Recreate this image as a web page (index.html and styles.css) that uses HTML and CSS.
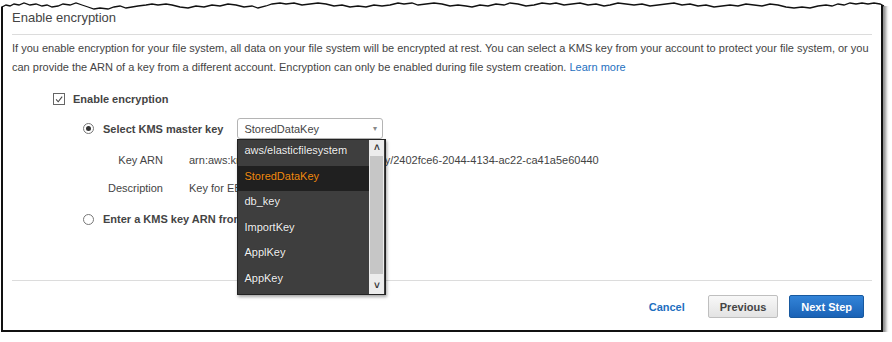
FILE: index.html
```
<!DOCTYPE html>
<html lang="en">
<head>
    <meta charset="UTF-8">
    <title>Enable encryption</title>
    <link rel="stylesheet" href="styles.css">
</head>
<body>
    <div class="frame">
        <!-- torn top edge of the screenshot -->
        <svg class="torn" width="890" height="12" viewBox="0 0 890 12">
            <path d="M0 0 L0 7 L6 5 L10 6 L14 4 L19 5 L24 3 L30 5 L36 4 L42 6 L47 5 L52 7 L58 6 L63 4 L70 5 L76 3 L82 5 L88 7 L94 9 L100 8 L108 9 L114 7 L120 6 L126 8 L132 7 L138 6 L146 5 L152 4 L158 5 L166 4 L172 5 L180 7 L188 8 L196 6 L204 7 L212 5 L220 6 L228 4 L236 5 L244 7 L252 6 L258 8 L266 6 L272 4 L280 3 L286 4 L294 3 L302 5 L310 4 L318 3 L326 4 L334 6 L342 5 L350 7 L358 6 L366 7 L374 5 L382 6 L390 5 L398 3 L404 4 L412 3 L418 5 L426 4 L434 3 L442 4 L450 6 L458 5 L466 6 L472 7 L480 5 L488 6 L496 4 L504 5 L510 3 L518 4 L526 6 L534 5 L542 3 L550 4 L556 3 L564 5 L572 4 L580 3 L588 5 L596 4 L604 6 L610 5 L618 3 L626 4 L634 5 L642 4 L650 6 L658 5 L666 4 L674 3 L682 5 L690 4 L698 6 L706 5 L714 7 L722 6 L730 5 L738 6 L746 4 L754 5 L762 6 L770 4 L778 5 L786 7 L794 8 L802 7 L810 8 L818 6 L826 5 L832 6 L838 4 L844 5 L850 3 L856 4 L862 3 L868 4 L874 3 L880 4 L884 6 L890 6 L890 0 Z" fill="#ffffff"/>
            <polyline points="2,7 6,5 10,6 14,4 19,5 24,3 30,5 36,4 42,6 47,5 52,7 58,6 63,4 70,5 76,3 82,5 88,7 94,9 100,8 108,9 114,7 120,6 126,8 132,7 138,6 146,5 152,4 158,5 166,4 172,5 180,7 188,8 196,6 204,7 212,5 220,6 228,4 236,5 244,7 252,6 258,8 266,6 272,4 280,3 286,4 294,3 302,5 310,4 318,3 326,4 334,6 342,5 350,7 358,6 366,7 374,5 382,6 390,5 398,3 404,4 412,3 418,5 426,4 434,3 442,4 450,6 458,5 466,6 472,7 480,5 488,6 496,4 504,5 510,3 518,4 526,6 534,5 542,3 550,4 556,3 564,5 572,4 580,3 588,5 596,4 604,6 610,5 618,3 626,4 634,5 642,4 650,6 658,5 666,4 674,3 682,5 690,4 698,6 706,5 714,7 722,6 730,5 738,6 746,4 754,5 762,6 770,4 778,5 786,7 794,8 802,7 810,8 818,6 826,5 832,6 838,4 844,5 850,3 856,4 862,3 868,4 874,3 880,4 884,6" fill="none" stroke="#111" stroke-width="1.3"/>
        </svg>

        <div class="panel">
            <h2 class="panel-title">Enable encryption</h2>
            <p class="intro">If you enable encryption for your file system, all data on your file system will be encrypted at rest. You can select a KMS key from your account to protect your file system, or you<br>can provide the ARN of a key from a different account. Encryption can only be enabled during file system creation. <a href="#" class="link">Learn more</a></p>

            <div class="options">
                <div class="check-row">
                    <span class="checkbox">
                        <svg width="11" height="11" viewBox="0 0 11 11"><path d="M2.3 5.4 L4.6 8 L9 2.4" fill="none" stroke="#444" stroke-width="1.2"/></svg>
                    </span>
                    <span class="opt-label">Enable encryption</span>
                </div>

                <div class="key-choice">
                    <div class="radio-row">
                        <span class="radio checked"></span>
                        <span class="opt-label">Select KMS master key</span>
                        <div class="select-wrap">
                            <div class="select-box">
                                <span>StoredDataKey</span>
                                <span class="caret">&#9662;</span>
                            </div>
                            <div class="dropdown">
                                <ul class="dropdown-list">
                                    <li>aws/elasticfilesystem</li>
                                    <li class="active">StoredDataKey</li>
                                    <li>db_key</li>
                                    <li>ImportKey</li>
                                    <li>ApplKey</li>
                                    <li>AppKey</li>
                                </ul>
                                <div class="scrollbar">
                                    <span class="scroll-btn">&#708;</span>
                                    <span class="scroll-thumb"></span>
                                    <span class="scroll-btn">&#709;</span>
                                </div>
                            </div>
                        </div>
                    </div>

                    <dl class="key-details">
                        <dt>Key ARN</dt>
                        <dd>arn:aws:kms:us-east-1:12345678901:key/2402fce6-2044-4134-ac22-ca41a5e60440</dd>
                        <dt>Description</dt>
                        <dd>Key for EBS volumes</dd>
                    </dl>

                    <div class="radio-row arn-row">
                        <span class="radio"></span>
                        <span class="opt-label">Enter a KMS key ARN from another account</span>
                    </div>
                </div>
            </div>
        </div>

        <div class="footer">
            <a href="#" class="cancel-link">Cancel</a>
            <button class="btn btn-default">Previous</button>
            <button class="btn btn-primary">Next Step</button>
        </div>
    </div>
</body>
</html>
```

FILE: styles.css
```
body {
    margin: 0;
    background: #ffffff;
    font-family: "Liberation Sans", Arial, sans-serif;
    color: #444;
}

/* outer frame of the screenshot */
.frame {
    position: relative;
    margin-left: 1px;
    width: 878px;
    border: solid #111;
    border-width: 0 2px 2px 2px;
    box-shadow: 3px 3px 3px rgba(0, 0, 0, 0.45);
    background: #ffffff;
}

.torn {
    position: absolute;
    top: 0;
    left: -3px;
    display: block;
}

.panel {
    padding: 9px 9px 51px 9px;
}

.panel-title {
    margin: 0;
    padding-bottom: 7px;
    border-bottom: 1px solid #dcdcdc;
    font-size: 13px;
    font-weight: normal;
    line-height: 18px;
    color: #444;
}

.intro {
    margin: 4px 0 0 0;
    font-size: 11px;
    line-height: 19px;
    color: #444;
    white-space: nowrap;
}

.link {
    color: #1e6fc0;
    text-decoration: none;
}

.options {
    margin-top: 12px;
    padding-left: 41px;
}

.check-row {
    display: flex;
    align-items: center;
    height: 20px;
}

.checkbox {
    width: 12px;
    height: 12px;
    border: 1px solid #666;
    box-sizing: border-box;
    display: flex;
    align-items: center;
    justify-content: center;
    margin-right: 8px;
}

.checkbox svg {
    display: block;
}

.opt-label {
    font-size: 11px;
    font-weight: bold;
    color: #444;
}

.key-choice {
    padding-left: 30px;
}

.radio-row {
    display: flex;
    align-items: center;
    height: 21px;
    margin-top: 9px;
}

.radio {
    width: 11px;
    height: 11px;
    border: 1px solid #777;
    border-radius: 50%;
    box-sizing: border-box;
    margin-right: 9px;
    display: flex;
    align-items: center;
    justify-content: center;
    background: #fff;
}

.radio.checked::after {
    content: "";
    width: 5px;
    height: 5px;
    border-radius: 50%;
    background: #333;
}

.select-wrap {
    position: relative;
    margin-left: 14px;
}

.select-box {
    width: 146px;
    height: 21px;
    box-sizing: border-box;
    border: 1px solid #b4b4b4;
    border-radius: 3px;
    padding: 0 5px 0 6px;
    display: flex;
    align-items: center;
    justify-content: space-between;
    font-size: 11px;
    color: #444;
}

.caret {
    font-size: 8px;
    color: #888;
}

/* open dropdown list */
.dropdown {
    position: absolute;
    top: 100%;
    left: 0;
    width: 149px;
    height: 156px;
    box-sizing: border-box;
    background: #3e3e3e;
    border: 1px solid #222;
    box-shadow: 1px 2px 3px rgba(0, 0, 0, 0.35);
    display: flex;
    z-index: 5;
}

.dropdown-list {
    list-style: none;
    margin: 0;
    padding: 0;
    flex: 1;
}

.dropdown-list li {
    height: 25.6px;
    box-sizing: border-box;
    padding: 0 0 4px 6px;
    line-height: 21px;
    font-size: 11px;
    color: #f2f2f2;
    text-shadow: 0 0 1px rgba(0, 0, 0, 0.6);
}

.dropdown-list li.active {
    background: #202020;
    color: #f08c14;
}

.scrollbar {
    width: 15px;
    margin-right: 1px;
    background: #ececec;
    display: flex;
    flex-direction: column;
    align-items: center;
}

.scroll-btn {
    height: 16px;
    line-height: 16px;
    font-size: 10px;
    font-weight: bold;
    color: #333;
}

.scroll-thumb {
    flex: 1;
    width: 13px;
    background: #c6c6c6;
    margin-bottom: 4px;
}

.key-details {
    display: grid;
    grid-template-columns: 60px auto;
    column-gap: 26px;
    margin: 7px 0 0 0;
    padding-left: 20px;
    font-size: 11px;
    color: #444;
}

.key-details dt,
.key-details dd {
    margin: 0;
    height: 28px;
    line-height: 28px;
    white-space: nowrap;
}

.key-details dt {
    text-align: right;
}

.arn-row {
    height: 20px;
    margin-top: 7px;
}

.footer {
    margin: 0 9px;
    border-top: 1px solid #dcdcdc;
    padding: 14px 8px 12px 0;
    display: flex;
    justify-content: flex-end;
    align-items: center;
}

.cancel-link {
    font-size: 11px;
    font-weight: bold;
    color: #1e6fc0;
    text-decoration: none;
    margin-right: 23px;
}

.btn {
    height: 23px;
    padding: 0 11px;
    border-radius: 2px;
    font-family: "Liberation Sans", Arial, sans-serif;
    font-size: 11px;
    font-weight: bold;
    cursor: pointer;
}

.btn-default {
    background: linear-gradient(#f8f8f8, #e3e3e3);
    border: 1px solid #bfbfbf;
    color: #444;
    margin-right: 11px;
}

.btn-primary {
    background: linear-gradient(#3384d8, #1a62b6);
    border: 1px solid #18599f;
    color: #ffffff;
}
```
